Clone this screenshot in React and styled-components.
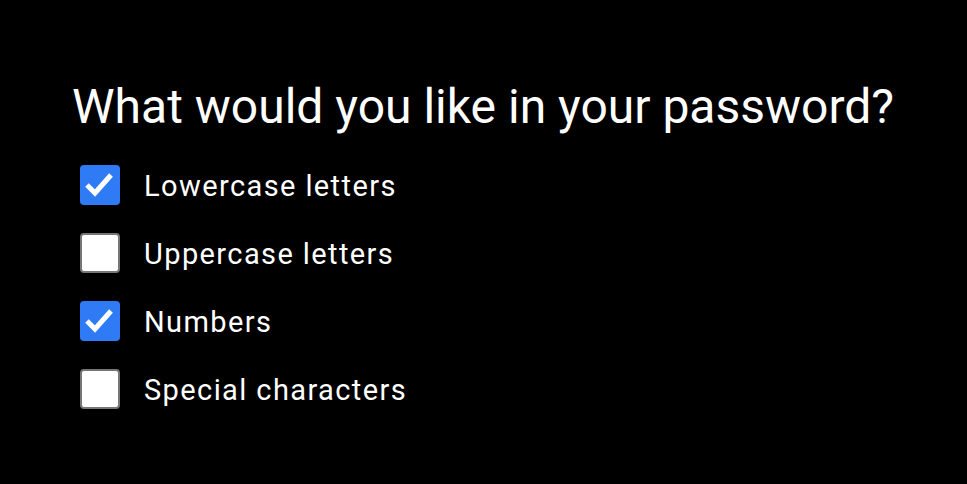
import React from 'react';
import styled, { createGlobalStyle } from 'styled-components';

const GlobalStyle = createGlobalStyle`
  html, body {
    margin: 0;
    padding: 0;
    background: #000;
  }
  body {
    font-family: Roboto, "Liberation Sans", Arial, sans-serif;
    color: #fff;
  }
`;

const Page = styled.main`
  width: 967px;
  height: 484px;
  box-sizing: border-box;
  padding: 79px 0 0 72px;
  background: #000;
`;

const Title = styled.h1`
  margin: 0 0 30px;
  font-size: 48px;
  line-height: 56px;
  font-weight: 400;
  color: #fff;
  white-space: nowrap;
`;

const OptionList = styled.ul`
  list-style: none;
  margin: 0;
  padding: 0 0 0 8px;
  display: flex;
  flex-direction: column;
  gap: 28px;
`;

const Option = styled.li`
  display: flex;
  align-items: center;
  gap: 24px;
  height: 40px;
`;

const Box = styled.span`
  width: 40px;
  height: 40px;
  box-sizing: border-box;
  border-radius: 4px;
  display: flex;
  align-items: center;
  justify-content: center;
  flex-shrink: 0;
  background: ${p => (p.$checked ? '#2f7bf5' : '#fff')};
  border: ${p => (p.$checked ? 'none' : '2px solid #767676')};
`;

const Label = styled.span`
  font-size: 29px;
  line-height: 40px;
  letter-spacing: 1.4px;
  padding-top: 1px;
  color: #fff;
`;

const Check = () => (
  <svg width="40" height="40" viewBox="0 0 40 40">
    <path
      d="M7 20 L15 28 L31 10"
      fill="none"
      stroke="#fff"
      strokeWidth="5"
      strokeLinecap="butt"
      strokeLinejoin="miter"
    />
  </svg>
);

const options = [
  { label: 'Lowercase letters', checked: true },
  { label: 'Uppercase letters', checked: false },
  { label: 'Numbers', checked: true },
  { label: 'Special characters', checked: false },
];

export default function App() {
  return (
    <>
      <GlobalStyle />
      <Page>
        <Title>What would you like in your password?</Title>
        <OptionList>
          {options.map(o => (
            <Option key={o.label}>
              <Box $checked={o.checked}>{o.checked && <Check />}</Box>
              <Label>{o.label}</Label>
            </Option>
          ))}
        </OptionList>
      </Page>
    </>
  );
}
